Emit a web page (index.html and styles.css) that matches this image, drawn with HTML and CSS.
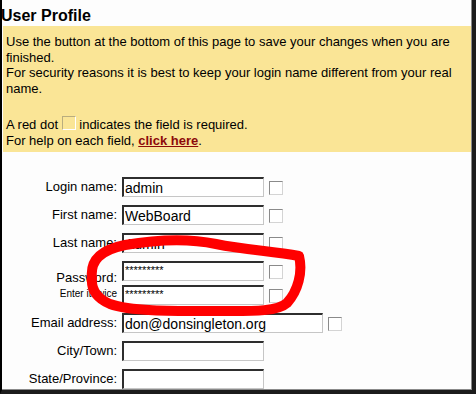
FILE: index.html
```html
<!DOCTYPE html>
<html lang="en">

<head>
  <meta charset="UTF-8">
  <meta name="viewport" content="width=device-width, initial-scale=1.0">
  <title>User Profile</title>
  <link rel="stylesheet" href="styles.css">
</head>

<body>
  <div class="janela">
    <h1>User Profile</h1>

    <div class="aviso">
      <p>Use the button at the bottom of this page to save your changes when you are<br>finished.<br>
        For security reasons it is best to keep your login name different from your real<br>name.</p>
      <p class="legenda">A red dot <span class="ponto"></span> indicates the field is required.<br>
        For help on each field, <a href="#">click here</a>.</p>
    </div>

    <form id="perfilForm">
      <div class="linha">
        <label for="login">Login name:</label>
        <input type="text" id="login" value="admin">
        <span class="req"></span>
      </div>
      <div class="linha">
        <label for="first">First name:</label>
        <input type="text" id="first" value="WebBoard">
        <span class="req"></span>
      </div>
      <div class="linha">
        <label for="last">Last name:</label>
        <input type="text" id="last" value="Admin">
        <span class="req"></span>
      </div>
      <div class="linha">
        <label for="senha" class="baixo">Password:</label>
        <input type="text" id="senha" class="senha" value="*********">
        <span class="req"></span>
      </div>
      <div class="linha junto">
        <label for="senha2" class="pequeno">Enter it twice</label>
        <input type="text" id="senha2" class="senha" value="*********">
        <span class="req"></span>
      </div>
      <div class="linha">
        <label for="email">Email address:</label>
        <input type="text" id="email" class="largo" value="don@donsingleton.org">
        <span class="req"></span>
      </div>
      <div class="linha">
        <label for="cidade">City/Town:</label>
        <input type="text" id="cidade">
      </div>
      <div class="linha">
        <label for="estado">State/Province:</label>
        <input type="text" id="estado">
      </div>
    </form>

    <svg class="circulo" width="476" height="394" viewBox="0 0 476 394">
      <path d="M 92 278 C 90 261, 100 250, 125 245 C 160 239, 192 239, 216 244 C 245 250, 272 251, 299 256 C 303 272, 298 291, 287 303 C 277 312, 250 311, 220 311 C 180 311, 132 312, 110 304 C 96 298, 91 289, 92 278 Z"
        fill="none" stroke="#f00" stroke-width="10" stroke-linejoin="round" />
    </svg>
  </div>
</body>

</html>
```

FILE: styles.css
```css
body {
  margin: 0;
  padding: 0;
  font-family: "Liberation Sans", Arial, sans-serif;
  color: #000;
}

.janela {
  position: relative;
  width: 476px;
  height: 394px;
  box-sizing: border-box;
  overflow: hidden;
  background-color: #fdfdfd;
  border-left: 2px solid #000;
  border-right: 4px solid #1c1c1c;
  border-bottom: 4px solid #1c1c1c;
  box-shadow: inset -1px -1px 0 #8a8a8a;
}

h1 {
  margin: 0 0 1px -1px;
  padding-top: 7px;
  font-size: 16px;
  line-height: 18px;
  font-weight: bold;
}

.aviso {
  margin: 0 1px;
  padding: 8px 3px 4px;
  background-color: #fae596;
  font-size: 13px;
  line-height: 15.5px;
}

.aviso p {
  margin: 0;
  white-space: nowrap;
}

.aviso .legenda {
  margin-top: 20px;
}

.ponto {
  display: inline-block;
  width: 12px;
  height: 12px;
  vertical-align: -1px;
  border: 1px solid #fff;
  border-top-color: #b9ad7e;
  border-left-color: #b9ad7e;
}

.aviso a {
  color: #8c0a0a;
  font-weight: bold;
}

form {
  padding-top: 17px;
}

.linha {
  display: flex;
  align-items: center;
  height: 20px;
  margin-top: 8px;
}

.linha.junto {
  margin-top: 4px;
}

.linha label {
  width: 115px;
  margin-right: 5px;
  text-align: right;
  font-size: 13px;
  line-height: 20px;
}

.linha label.baixo {
  align-self: flex-end;
  line-height: 15px;
  margin-bottom: -4px;
}

.linha label.pequeno {
  align-self: flex-start;
  font-size: 10px;
  line-height: 12px;
  margin-top: 3px;
}

input[type="text"] {
  width: 142px;
  height: 20px;
  box-sizing: border-box;
  margin: 0;
  padding: 0 1px;
  font-family: "Liberation Sans", Arial, sans-serif;
  font-size: 14px;
  color: #000;
  background-color: #fff;
  border-top: 2px solid #2e2e2e;
  border-left: 2px solid #2e2e2e;
  border-right: 1px solid #c6c6c6;
  border-bottom: 1px solid #c6c6c6;
  outline: none;
}

input.senha {
  font-size: 11px;
  padding-bottom: 3px;
}

input.largo {
  width: 201px;
}

.req {
  width: 12px;
  height: 12px;
  margin: 2px 0 0 5px;
  background-color: #fff;
  border: 1px solid #d4d4d4;
  border-top-color: #8a8a8a;
  border-left-color: #8a8a8a;
}

.circulo {
  position: absolute;
  left: -2px;
  top: 0;
  pointer-events: none;
  filter: blur(0.7px);
}
```
